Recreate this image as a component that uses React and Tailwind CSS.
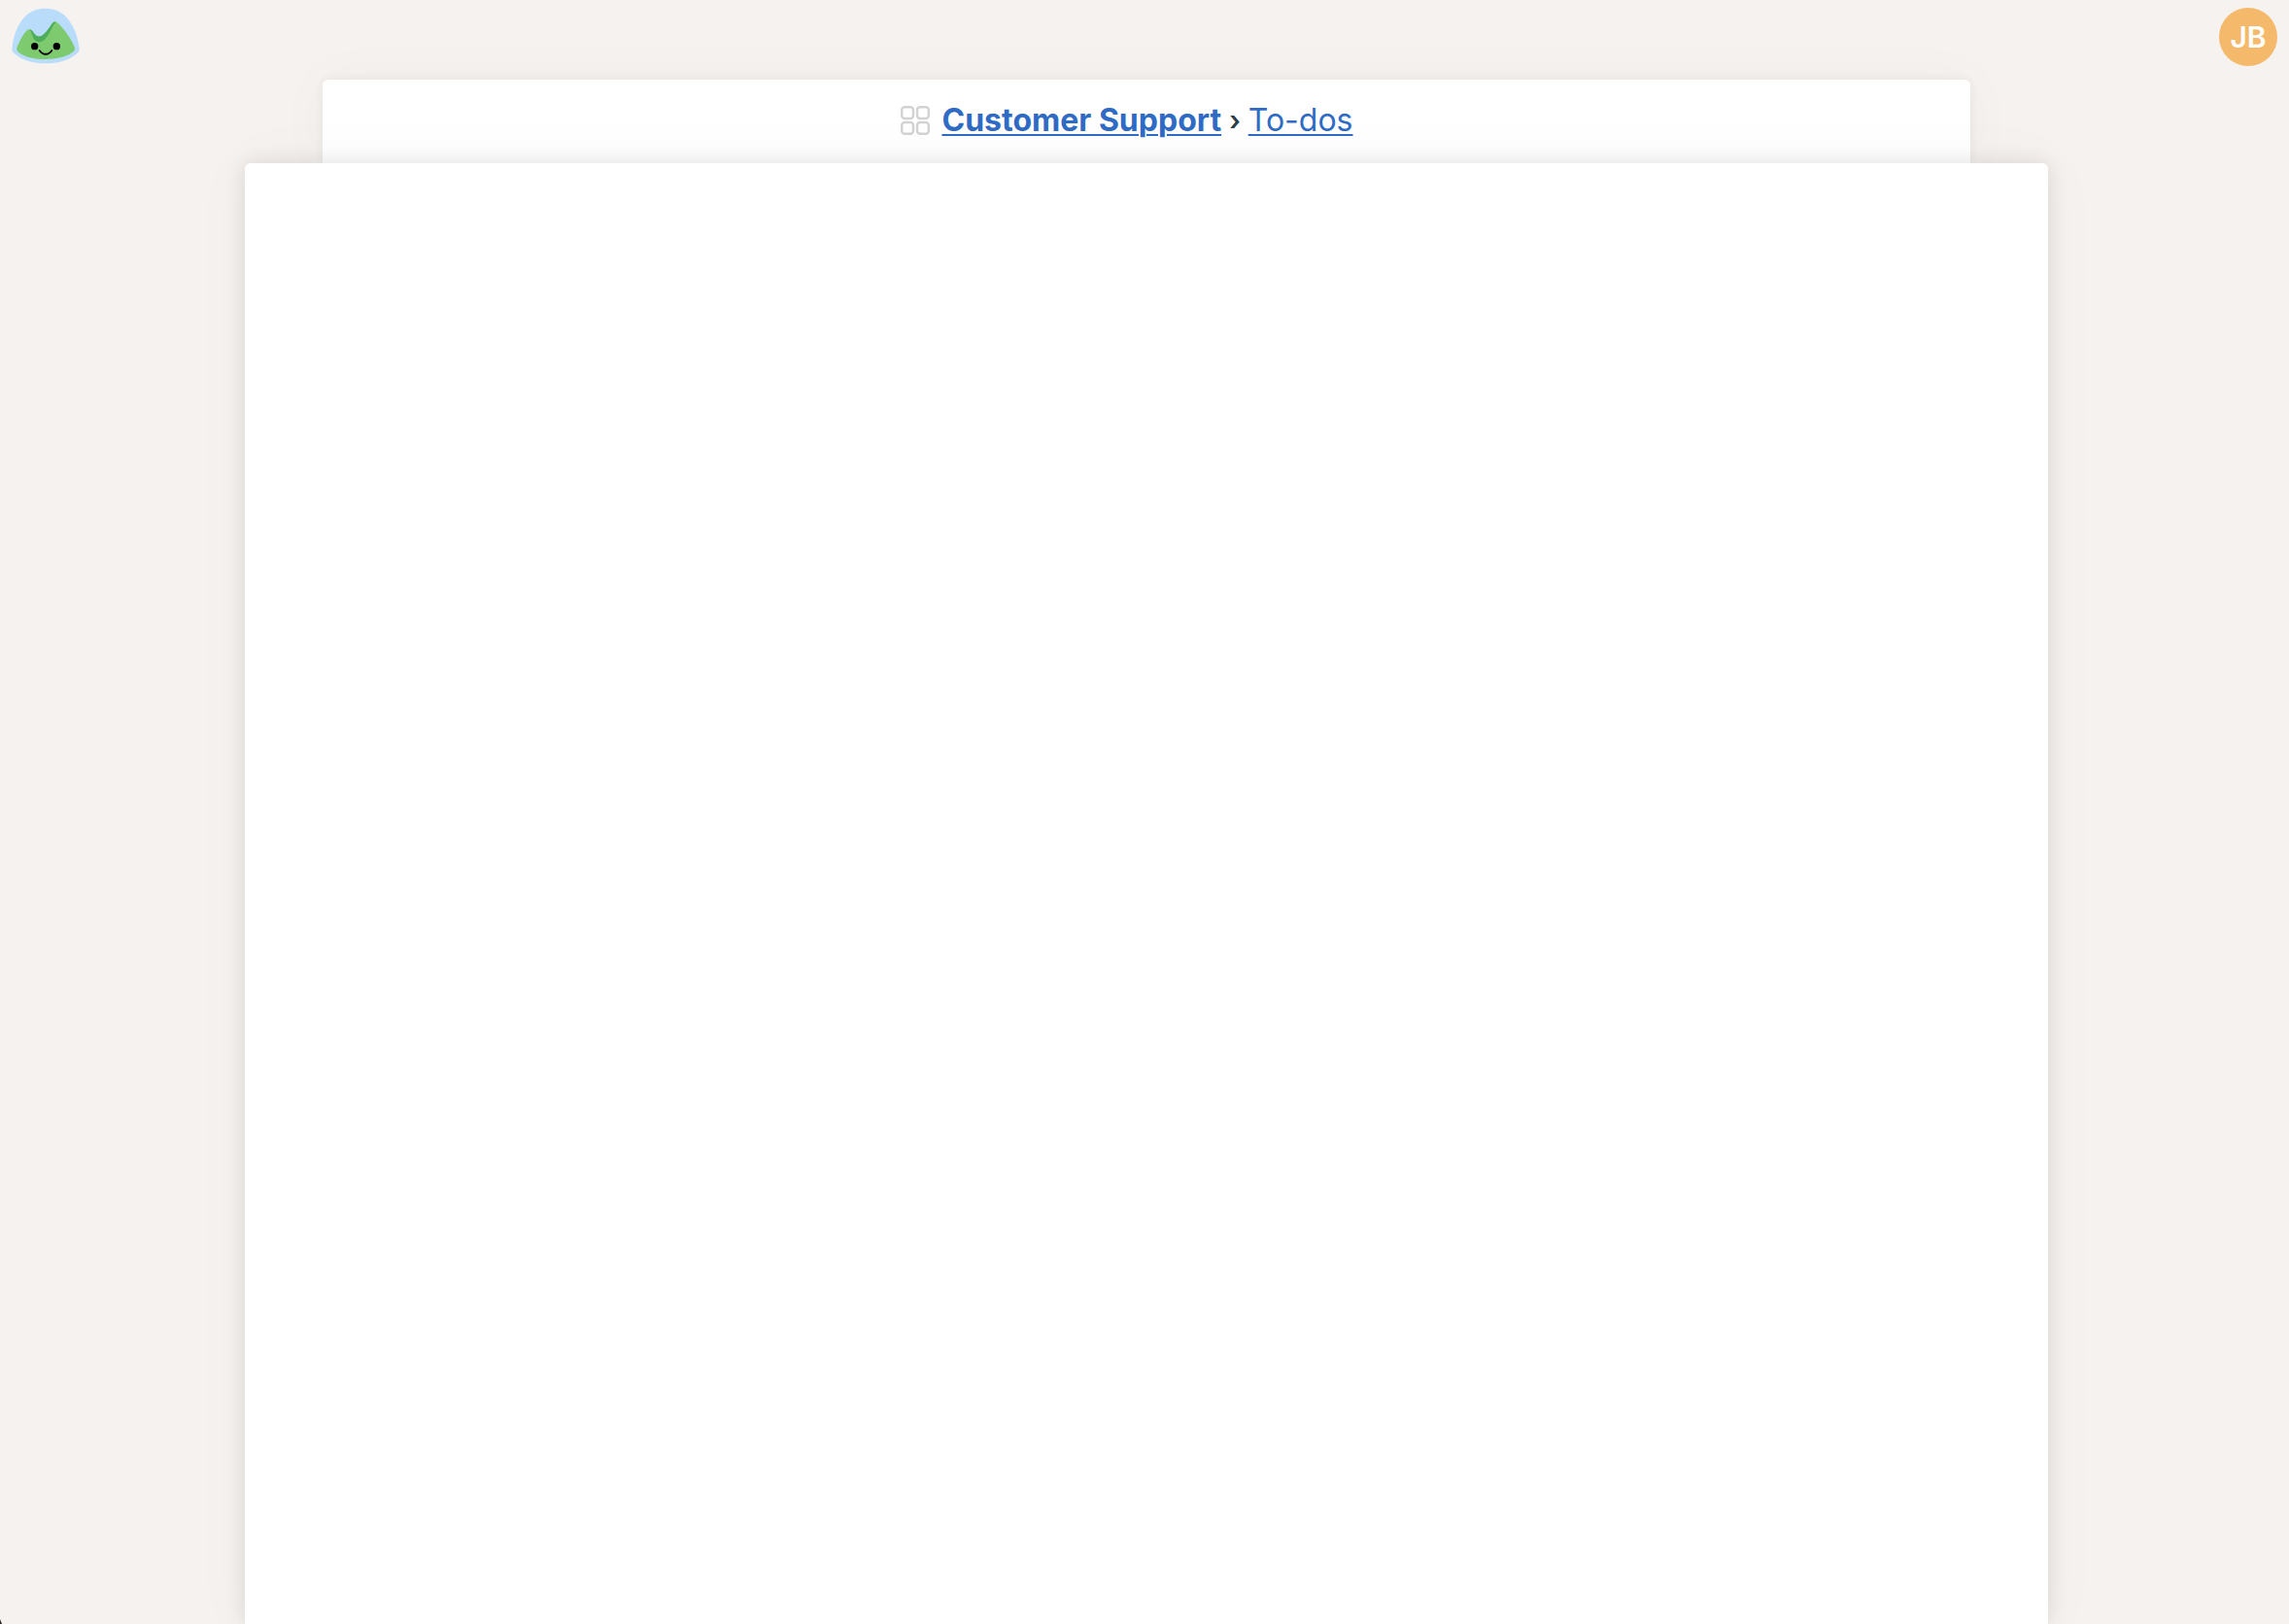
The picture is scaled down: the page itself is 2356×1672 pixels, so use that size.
function Logo() {
  return (
    <svg viewBox="36 24 210 174" className="h-[58px] w-[70px]" aria-hidden="true">
      <path
        d="M140 26C92 26 64 56 48 100C41 120 38 138 37 152C37 158 41 162 48 168C74 189 106 196 141 196C176 196 208 189 234 168C241 162 245 158 245 152C243 138 240 120 233 100C216 56 188 26 140 26Z"
        fill="#b9dcfb"
      />
      <path
        d="M52 147C62 124 72 104 84 93C91 88 97 92 102 99C108 108 114 114 122 114C136 113 148 92 160 74C165 66 171 64 177 70C197 88 219 118 231 148C233 154 229 158 222 163C201 177 172 183 140 183C108 183 81 177 61 164C54 159 50 154 52 147Z"
        fill="#7dcb6e"
      />
      <path
        d="M91 91C97 91 100 96 103 100C109 108 114 113 122 112C136 110 148 91 160 74C164 68 168 65 172 67C161 84 151 108 139 121C129 132 113 133 105 121C99 112 98 98 91 91Z"
        fill="#4ead5b"
      />
      <circle cx="107" cy="143" r="11" fill="#000" />
      <circle cx="175" cy="143" r="11" fill="#000" />
      <path d="M122 156C132 171 150 171 160 156" fill="none" stroke="#000" strokeWidth="5.5" strokeLinecap="round" />
    </svg>
  );
}

function GridIcon() {
  return (
    <svg viewBox="0 0 30 30" className="size-[30px]" fill="none" stroke="#d3d3d3" strokeWidth="2.4" aria-hidden="true">
      <rect x="1.2" y="1.2" width="11.8" height="11.8" rx="3" />
      <rect x="17" y="1.2" width="11.8" height="11.8" rx="3" />
      <rect x="1.2" y="17" width="11.8" height="11.8" rx="3" />
      <rect x="17" y="17" width="11.8" height="11.8" rx="3" />
    </svg>
  );
}

export default function App() {
  return (
    <div className="relative flex min-h-screen flex-col overflow-hidden bg-[#f6f2ef] font-['Inter','Liberation_Sans',sans-serif]">
      <header className="flex h-[82px] items-start justify-between px-3 pt-2">
        <a href="#home" aria-label="Home">
          <Logo />
        </a>
        <button
          type="button"
          className="flex size-[60px] items-center justify-center rounded-full bg-[#f5b96b] text-[30px] font-semibold text-white"
        >
          JB
        </button>
      </header>

      <div className="flex w-full flex-1 flex-col pr-[248px] pl-[252px]">
        <nav
          aria-label="Breadcrumb"
          className="mx-20 flex h-[86px] items-center justify-center gap-3 rounded-t-md bg-white pr-10 pb-0.5 shadow-[0_0_10px_rgba(70,60,50,0.07),0_0_60px_rgba(70,60,50,0.03)]"
        >
          <GridIcon />
          <div className="flex items-center gap-2 text-[32px] leading-10 text-[#2f6bc4]">
            <a href="#project" className="font-bold underline decoration-2 underline-offset-3">
              Customer Support
            </a>
            <span className="text-[28px] font-semibold text-[#283c46]">›</span>
            <a href="#todos" className="underline decoration-2 underline-offset-3">
              To-dos
            </a>
          </div>
        </nav>
        <main className="relative flex-1 rounded-t-md bg-white shadow-[0_0_20px_rgba(70,60,50,0.14),0_0_70px_rgba(70,60,50,0.03)]" />
      </div>

      <svg viewBox="0 0 2 5" className="absolute bottom-0 left-0 h-[5px] w-[2px]" aria-hidden="true">
        <path d="M0 0L2 5H0Z" fill="#2b2624" />
      </svg>
    </div>
  );
}
